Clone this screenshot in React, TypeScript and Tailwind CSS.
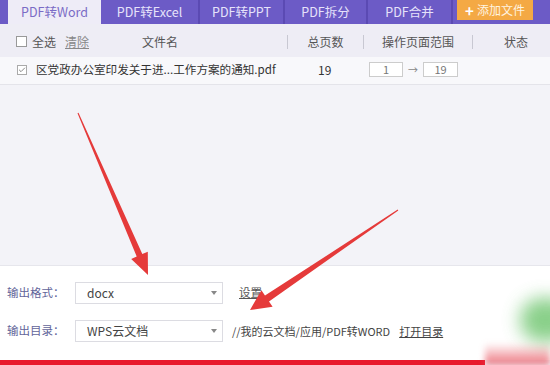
import { Check } from "lucide-react";

const tabs = [
  { label: "PDF转Excel", w: "w-[99px]" },
  { label: "PDF转PPT", w: "w-[85px]" },
  { label: "PDF拆分", w: "w-[83px]" },
  { label: "PDF合并", w: "w-[85px]" },
];

function Caret() {
  return <span className="w-0 h-0 border-l-[3px] border-r-[3px] border-t-[4px] border-l-transparent border-r-transparent border-t-[#888]" />;
}

function Select({ value }: { value: string }) {
  return (
    <div className="w-[148px] h-[22px] border border-[#dcdce2] bg-white flex items-center justify-between pl-[11px] pr-[5px] text-[12px] text-[#444]">
      <span>{value}</span>
      <Caret />
    </div>
  );
}

export default function App() {
  return (
    <div
      className="relative w-[550px] h-[365px] overflow-hidden bg-[#f3f3f8] flex flex-col text-[12px]"
      style={{ fontFamily: '"Noto Sans CJK SC", "Noto Sans", sans-serif' }}
    >
      {/* ================= TABS ================= */}
      <div className="h-[24px] bg-[#6c5bc6] flex pl-[8px] shrink-0">
        <div className="w-[93px] h-full bg-[#eeecf7] text-[#7a6bc6] flex items-center justify-center text-[12.5px]">
          PDF转Word
        </div>
        {tabs.map((t) => (
          <div
            key={t.label}
            className={`${t.w} h-full flex items-center justify-center text-[#e6e2fa] text-[12.5px] border-r-2 border-[#5b4ab3]`}
          >
            {t.label}
          </div>
        ))}
        <div className="ml-[4px] w-[76px] h-[20px] bg-[#f4a944] text-[#fff4e0] flex items-center justify-center gap-[3px] text-[12px]">
          <span className="text-[15px] leading-none font-bold text-white">+</span>
          添加文件
        </div>
      </div>

      {/* ================= HEADER ================= */}
      <div className="h-[33px] bg-[#eeedf5] flex items-center text-[#555] shrink-0 pt-[2px]">
        <span className="ml-[16px] w-[11px] h-[11px] border border-[#999] bg-white" />
        <span className="ml-[5px]">全选</span>
        <span className="ml-[9px] text-[#888] underline">清除</span>
        <span className="ml-[53px] w-[145px]">文件名</span>
        <span className="w-px h-[14px] bg-[#c8c8d2]" />
        <span className="w-[75px] text-center">总页数</span>
        <span className="w-px h-[14px] bg-[#c8c8d2]" />
        <span className="w-[108px] text-center">操作页面范围</span>
        <span className="w-px h-[14px] bg-[#c8c8d2]" />
        <span className="flex-1 text-right pr-[22px]">状态</span>
      </div>

      {/* ================= FILE ROW ================= */}
      <div className="h-[28px] bg-[#f8f8fb] border-b border-[#e4e4ea] flex items-center text-[#333] shrink-0 pb-[2px]">
        <span className="ml-[17px] w-[10px] h-[10px] border border-[#aaa] bg-white flex items-center justify-center">
          <Check size={8} strokeWidth={3} className="text-[#888]" />
        </span>
        <span className="ml-[9px] w-[282px] text-[11.6px] whitespace-nowrap">区党政办公室印发关于进...工作方案的通知.pdf</span>
        <span className="w-[14px]">19</span>
        <span className="ml-[37px] w-[34px] h-[15px] border border-[#ccc] bg-white text-[#777] text-[11px] flex items-center justify-center">1</span>
        <span className="mx-[5px] text-[#888] text-[10px]">→</span>
        <span className="w-[35px] h-[15px] border border-[#ccc] bg-white text-[#777] text-[11px] flex items-center justify-center">19</span>
      </div>

      <div className="flex-1" />

      {/* ================= OUTPUT SETTINGS ================= */}
      <div className="h-[95px] bg-white border-t border-[#e6e6ec] flex flex-col gap-[16px] pt-[16px] shrink-0 text-[11.5px]">
        <div className="flex items-center">
          <span className="ml-[7px] w-[68px] text-[#62659a]">输出格式：</span>
          <Select value="docx" />
          <span className="ml-[16px] text-[#555] underline">设置</span>
        </div>
        <div className="flex items-center">
          <span className="ml-[7px] w-[68px] text-[#62659a]">输出目录：</span>
          <Select value="WPS云文档" />
          <span className="ml-[9px] text-[#444] text-[11px]">//我的云文档/应用/PDF转WORD</span>
          <span className="ml-[9px] text-[#444] text-[11px] underline">打开目录</span>
        </div>
      </div>
      <div className="h-[5px] w-[485px] bg-[#e8192c] shrink-0" />

      {/* watermark blur */}
      <div className="absolute right-[-22px] top-[298px] w-[52px] h-[44px] rounded-full bg-[#6cc46c] blur-[9px] opacity-80" />
      <div className="absolute left-[485px] right-0 bottom-0 h-[22px] bg-gradient-to-b from-transparent to-[#e8505c]/80 blur-[3px]" />

      {/* annotation arrows */}
      <svg className="absolute inset-0 pointer-events-none" width="550" height="365" viewBox="0 0 550 365">
        <polygon
          fill="#e53a3a"
          points="78.5,112.8 142.3,254.1 147.8,251.7 148,275 131.2,258.9 136.7,256.5 77.5,113.2"
        />
        <polygon
          fill="#e53a3a"
          points="397.7,209.6 265,295.6 261.4,290.2 250,310 272.6,306.8 269,301.4 398.3,210.4"
        />
      </svg>
    </div>
  );
}
